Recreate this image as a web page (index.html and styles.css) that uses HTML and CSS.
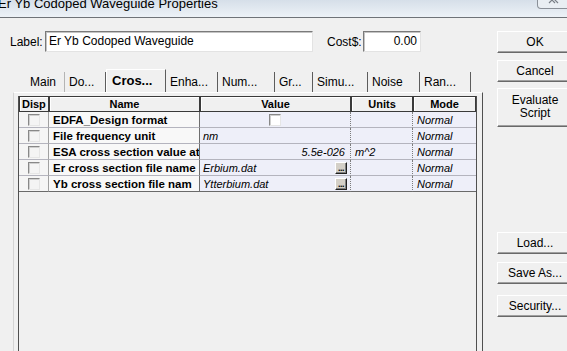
FILE: index.html
```html
<!DOCTYPE html>
<html lang="en">
<head>
    <meta charset="UTF-8">
    <title>Er Yb Codoped Waveguide Properties</title>
    <link rel="stylesheet" href="styles.css">
</head>
<body>
    <div class="titlebar">
        <span class="title">Er Yb Codoped Waveguide Properties</span>
        <span class="close">
            <svg width="30" height="9" viewBox="0 0 30 9">
                <path d="M11 -2 L17 4 M17 -2 L11 4 M14 -2 L20 4" stroke="#7a8088" stroke-width="1.2" fill="none"/>
            </svg>
        </span>
    </div>
    <div class="dialog">
        <div class="main">
            <div class="label-row">
                <span class="field-label">Label:</span>
                <div class="text-input label-input">Er Yb Codoped Waveguide</div>
                <span class="field-label cost-label">Cost$:</span>
                <div class="text-input cost-input">0.00</div>
            </div>
            <div class="tabs">
                <div class="tab tab-first">Main</div>
                <div class="tab">Do...</div>
                <div class="tab tab-active">Cros...</div>
                <div class="tab">Enha...</div>
                <div class="tab">Num...</div>
                <div class="tab">Gr...</div>
                <div class="tab">Simu...</div>
                <div class="tab">Noise</div>
                <div class="tab">Ran...</div>
            </div>
            <div class="panel">
                <div class="grid">
                    <div class="grid-row grid-head">
                        <div class="head-cell head-left">Disp</div>
                        <div class="head-cell">Name</div>
                        <div class="head-cell">Value</div>
                        <div class="head-cell">Units</div>
                        <div class="head-cell">Mode</div>
                    </div>
                    <div class="grid-row">
                        <div class="cell cell-disp"><span class="check"></span></div>
                        <div class="cell cell-name">EDFA_Design format</div>
                        <div class="cell cell-value value-center"><span class="check check-white"></span></div>
                        <div class="cell cell-units"></div>
                        <div class="cell cell-mode">Normal</div>
                    </div>
                    <div class="grid-row">
                        <div class="cell cell-disp"><span class="check"></span></div>
                        <div class="cell cell-name">File frequency unit</div>
                        <div class="cell cell-value">nm</div>
                        <div class="cell cell-units"></div>
                        <div class="cell cell-mode">Normal</div>
                    </div>
                    <div class="grid-row">
                        <div class="cell cell-disp"><span class="check"></span></div>
                        <div class="cell cell-name">ESA cross section value at</div>
                        <div class="cell cell-value value-right">5.5e-026</div>
                        <div class="cell cell-units">m^2</div>
                        <div class="cell cell-mode">Normal</div>
                    </div>
                    <div class="grid-row">
                        <div class="cell cell-disp"><span class="check"></span></div>
                        <div class="cell cell-name">Er cross section file name</div>
                        <div class="cell cell-value"><span>Erbium.dat</span><span class="browse">...</span></div>
                        <div class="cell cell-units"></div>
                        <div class="cell cell-mode">Normal</div>
                    </div>
                    <div class="grid-row grid-last">
                        <div class="cell cell-disp"><span class="check"></span></div>
                        <div class="cell cell-name">Yb cross section file nam</div>
                        <div class="cell cell-value"><span>Ytterbium.dat</span><span class="browse">...</span></div>
                        <div class="cell cell-units"></div>
                        <div class="cell cell-mode">Normal</div>
                    </div>
                </div>
            </div>
        </div>
        <div class="side">
            <div class="btn btn-ok">OK</div>
            <div class="btn btn-cancel">Cancel</div>
            <div class="btn btn-script">Evaluate<br>Script</div>
            <div class="btn btn-load">Load...</div>
            <div class="btn btn-save">Save As...</div>
            <div class="btn btn-security">Security...</div>
        </div>
    </div>
</body>
</html>
```

FILE: styles.css
```css
body {
    margin: 0;
    width: 567px;
    height: 351px;
    overflow: hidden;
    background-color: #f0f0f0;
    font-family: "Liberation Sans", Arial, sans-serif;
    font-size: 11px;
    color: #000;
}
.titlebar {
    height: 17px;
    border-bottom: 1px solid #6f7378;
    background: linear-gradient(to bottom, #d6dfe9, #edf2f7);
    display: flex;
    justify-content: space-between;
    overflow: hidden;
}
.title {
    margin: -4px 0 0 -2px;
    font-size: 13px;
    line-height: 16px;
    white-space: nowrap;
}
.close {
    width: 32px;
    height: 9px;
    margin: -1px -4px 0 0;
    border: 1px solid #8a9098;
    border-top: none;
    border-radius: 0 0 4px 4px;
    background-color: #e9eef3;
    overflow: hidden;
}
.close svg {
    display: block;
}
.dialog {
    display: flex;
}
.main {
    width: 497px;
    flex-shrink: 0;
}
.label-row {
    display: flex;
    align-items: center;
    height: 21px;
    margin-top: 13px;
    padding-left: 10px;
}
.field-label {
    width: 35px;
    font-size: 12px;
}
.cost-label {
    width: 36px;
    margin-left: 14px;
}
.text-input {
    height: 21px;
    box-sizing: border-box;
    padding: 0 3px;
    background-color: #fff;
    border: 1px solid;
    border-color: #7a7a7a #e3e3e3 #e3e3e3 #7a7a7a;
    box-shadow: inset 1px 1px 0 #c4c4c4;
    font-size: 12px;
    line-height: 19px;
    white-space: nowrap;
}
.label-input {
    width: 268px;
}
.cost-input {
    width: 58px;
    text-align: right;
}
.tabs {
    display: grid;
    grid-template-columns: 40px 41px 60px 52px 57px 38px 55px 52px 51px;
    align-items: end;
    height: 23px;
    margin-top: 17px;
    padding-left: 25px;
}
.tab {
    height: 20px;
    box-sizing: border-box;
    padding-left: 4px;
    border-right: 1px solid #5c5c5c;
    font-size: 12px;
    line-height: 20px;
    white-space: nowrap;
    overflow: hidden;
}
.tab-first {
    padding-left: 5px;
    border-right-color: #b4b4b4;
}
.tab-active {
    height: 23px;
    padding-left: 5px;
    border-left: 1px solid #fff;
    border-top: 1px solid #fff;
    font-size: 13px;
    font-weight: bold;
    line-height: 21px;
}
.panel {
    width: 470px;
    height: 259px;
    margin-left: 13px;
    box-sizing: border-box;
    padding: 3px 5px 0 4px;
    border-left: 1px solid #d4d4d4;
    border-right: 1px solid #505050;
    border-top: 1px solid #fff;
    overflow: hidden;
}
.grid {
    height: 300px;
    border: 1px solid #505050;
    border-top: none;
    background-color: #f0f0f0;
}
.grid-row {
    display: grid;
    grid-template-columns: 30px 151px 151px 62px 63px;
    height: 16px;
}
.head-cell {
    box-sizing: border-box;
    border: 1px solid #3a3a3a;
    box-shadow: inset 1px 1px 0 #fff;
    background-color: #f0f0f0;
    font-weight: bold;
    text-align: center;
    line-height: 14px;
    white-space: nowrap;
    overflow: hidden;
}
.head-left {
    text-align: left;
    padding-left: 2px;
}
.cell {
    box-sizing: border-box;
    display: flex;
    align-items: center;
    padding: 0 3px;
    border-bottom: 1px solid #b4b4be;
    border-right: 1px dotted #7c7c7c;
    background-color: #eeeff9;
    font-style: italic;
    white-space: nowrap;
    overflow: hidden;
}
.grid-last .cell {
    border-bottom-color: #6a6a6a;
}
.cell-disp {
    justify-content: center;
    border-right: 1px solid #a0a0a0;
    background-color: #f5f5f5;
}
.cell-name {
    padding-left: 4px;
    border-right: 1px solid #6e6e6e;
    background-color: #f8f8f8;
    font-style: normal;
    font-weight: bold;
    font-size: 11.5px;
}
.value-center {
    padding-left: 69px;
}
.value-right {
    justify-content: flex-end;
    padding-right: 5px;
}
.cell-units {
    padding-left: 4px;
}
.cell-mode {
    padding-left: 4px;
    border-right: none;
}
.check {
    width: 12px;
    height: 12px;
    box-sizing: border-box;
    border: 1px solid;
    border-color: #888 #e6e6e6 #e6e6e6 #888;
    box-shadow: inset 1px 1px 0 #cfcfcf;
    background-color: #f4f4f4;
}
.check-white {
    background-color: #fff;
}
.browse {
    width: 12px;
    height: 12px;
    margin-left: auto;
    box-sizing: border-box;
    border: 1px solid;
    border-color: #fff #202020 #202020 #fff;
    box-shadow: inset -1px -1px 0 #808080;
    background-color: #d4d0c8;
    font-style: normal;
    font-weight: bold;
    font-size: 9px;
    line-height: 11px;
    text-align: center;
    letter-spacing: -0.5px;
    overflow: hidden;
}
.side {
    display: flex;
    flex-direction: column;
    padding-top: 13px;
}
.btn {
    width: 76px;
    height: 22px;
    box-sizing: border-box;
    display: flex;
    align-items: center;
    justify-content: center;
    border: 1px solid;
    border-color: #fff #696969 #696969 #fff;
    box-shadow: inset -1px -1px 0 #a0a0a0;
    font-size: 12px;
    line-height: 13px;
    text-align: center;
}
.btn-cancel {
    margin-top: 7px;
}
.btn-script {
    height: 39px;
    margin-top: 6px;
    align-items: flex-start;
    padding-top: 5px;
}
.btn-load {
    margin-top: 105px;
}
.btn-save {
    margin-top: 8px;
}
.btn-security {
    margin-top: 11px;
}
```
